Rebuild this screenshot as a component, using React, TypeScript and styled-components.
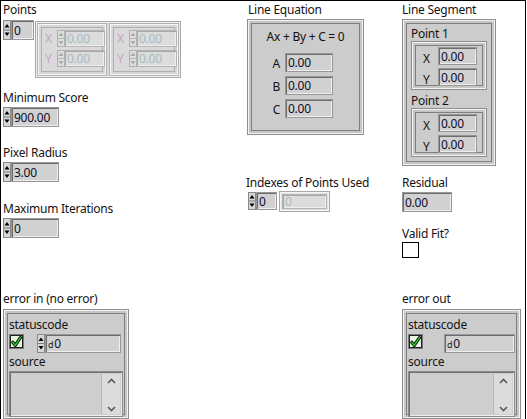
import React from "react";
import styled, { createGlobalStyle } from "styled-components";

const FONT = `"Noto Sans", "DejaVu Sans", sans-serif`;

const Global = createGlobalStyle`
  html, body { margin: 0; padding: 0; background: #fff; }
  body { font-family: ${FONT}; }
`;

const Panel = styled.div`
  position: relative;
  width: 526px;
  height: 419px;
  box-sizing: border-box;
  border: 1px solid #000;
  border-bottom: none;
  background: #fff;
  display: flex;
  padding: 1px 0 0 2px;
  overflow: hidden;
  font-family: ${FONT};
  font-size: 12px;
  letter-spacing: -0.25px;
  color: #141414;
`;

const Column = styled.div<{ $w?: number }>`
  display: flex;
  flex-direction: column;
  align-items: flex-start;
  flex: ${(p) => (p.$w ? `0 0 ${p.$w}px` : "1 1 auto")};
`;

const Label = styled.div<{ $mt?: number; $ml?: number }>`
  font-size: 12px;
  line-height: 15px;
  height: 15px;
  margin-top: ${(p) => p.$mt ?? 0}px;
  margin-left: ${(p) => p.$ml ?? 0}px;
  white-space: nowrap;
  color: #141414;
`;

const Row = styled.div<{ $mt?: number; $ml?: number; $gap?: number }>`
  display: flex;
  align-items: flex-start;
  margin-top: ${(p) => p.$mt ?? 0}px;
  margin-left: ${(p) => p.$ml ?? 0}px;
  gap: ${(p) => p.$gap ?? 0}px;
`;

const NumBox = styled.div<{ $w: number; $h?: number; $dim?: boolean; $ml?: number }>`
  width: ${(p) => p.$w}px;
  height: ${(p) => p.$h ?? 20}px;
  margin-left: ${(p) => p.$ml ?? 0}px;
  box-sizing: border-box;
  flex: none;
  background: ${(p) => (p.$dim ? "#dcdcdc" : "#d1d1d1")};
  border: 1px solid ${(p) => (p.$dim ? "#b4b4b4" : "#979797")};
  box-shadow: inset 1px 1px 0 ${(p) => (p.$dim ? "#a8a8a8" : "#6c6c6c")},
    inset -1px -1px 0 #eeeeee;
  padding-left: 2px;
  display: flex;
  align-items: center;
  font-size: 12px;
  color: ${(p) => (p.$dim ? "#a7bcc4" : "#0c0c2c")};
  white-space: nowrap;
`;

const Radix = styled.span`
  font-size: 9px;
  color: #222;
  margin-right: 1px;
  margin-top: 1px;
`;

const SpinSvg = styled.svg`
  display: block;
  flex: none;
`;

const Spin = ({ h = 20, dim = false }: { h?: number; dim?: boolean }) => {
  const m = h / 2;
  const c = dim ? "#a8a8a8" : "#000";
  return (
    <SpinSvg width={8} height={h} viewBox={`0 0 8 ${h}`}>
      <rect x="0.5" y="0.5" width="7" height={h - 1} fill={dim ? "#dedede" : "#d6d6d6"} stroke={dim ? "#b0b0b0" : "#8a8a8a"} />
      <line x1="1" y1={m} x2="7" y2={m} stroke={dim ? "#b0b0b0" : "#7a7a7a"} />
      <path d={`M4 ${m - 6} L6.5 ${m - 2.5} L1.5 ${m - 2.5} Z`} fill={c} />
      <path d={`M4 ${m + 6} L6.5 ${m + 2.5} L1.5 ${m + 2.5} Z`} fill={c} />
    </SpinSvg>
  );
};

const Cluster = styled.div<{ $w: number; $h: number; $mt?: number; $ml?: number; $pt?: number; $pl?: number }>`
  width: ${(p) => p.$w}px;
  height: ${(p) => p.$h}px;
  margin-top: ${(p) => p.$mt ?? 0}px;
  margin-left: ${(p) => p.$ml ?? 0}px;
  padding-top: ${(p) => p.$pt ?? 0}px;
  padding-left: ${(p) => p.$pl ?? 0}px;
  box-sizing: border-box;
  flex: none;
  background: #cccccc;
  border: 1px solid #8e8e8e;
  box-shadow: inset 0 0 0 1px #f2f2f2, inset 0 0 0 3px #c6c6c6, inset 0 0 0 4px #7e7e7e;
  display: flex;
  flex-direction: column;
  align-items: flex-start;
`;

const DimCluster = styled.div`
  width: 70px;
  height: 53px;
  box-sizing: border-box;
  background: #dadada;
  border: 1px solid #b2b2b2;
  box-shadow: inset 0 0 0 1px #f6f6f6, inset 0 0 0 3px #d6d6d6, inset 0 0 0 4px #b0b0b0;
  padding: 6px 0 0 7px;
  display: flex;
  flex-direction: column;
  gap: 3px;
`;

const ArrayFrame = styled.div`
  width: 146px;
  height: 57px;
  margin: 1px 0 0 1px;
  box-sizing: border-box;
  padding: 1px;
  gap: 2px;
  display: flex;
  background: #d8d8d8;
  border: 1px solid #a8a8a8;
  box-shadow: inset 0 0 0 1px #f0f0f0;
`;

const DimLetter = styled.span`
  width: 12px;
  font-size: 12px;
  line-height: 17px;
  color: #c5a6c6;
  flex: none;
`;

const EqText = styled.div`
  align-self: stretch;
  text-align: center;
  font-size: 12px;
  line-height: 15px;
  height: 15px;
  color: #101010;
`;

const EqRow = styled.div<{ $mt: number }>`
  display: flex;
  align-items: center;
  margin-top: ${(p) => p.$mt}px;
`;

const RowLetter = styled.span<{ $w: number }>`
  width: ${(p) => p.$w}px;
  font-size: 12px;
  text-align: right;
  padding-right: 5px;
  padding-top: 2px;
  box-sizing: border-box;
  color: #141414;
`;

const XYLetter = styled.span`
  width: 17px;
  padding-left: 2px;
  padding-top: 3px;
  box-sizing: border-box;
  font-size: 12px;
  color: #141414;
`;

const Frame2 = styled.div`
  margin-left: 2px;
  box-sizing: border-box;
  width: 51px;
  height: 21px;
  padding: 2px;
  background: #e2e2e2;
  border: 1px solid #a8a8a8;
  box-shadow: inset 0 0 0 1px #f4f4f4;
`;

const LedBox = styled.div`
  width: 17px;
  height: 17px;
  box-sizing: border-box;
  margin-top: 1px;
  border: 1px solid #000;
  background: #fff;
`;

const StatusRow = styled.div`
  display: flex;
  align-items: flex-start;
  margin-top: 2px;
  margin-left: 5px;
`;

const StringBox = styled.div<{ $w: number }>`
  width: ${(p) => p.$w}px;
  height: 46px;
  margin-top: 2px;
  margin-left: 5px;
  box-sizing: border-box;
  background: #cecece;
  border: 1px solid #8a8a8a;
  box-shadow: inset 1px 1px 0 #707070, inset -1px -1px 0 #ededed;
  display: flex;
  justify-content: flex-end;
  padding: 2px 2px 2px 0;
`;

const ScrollBar = styled.div`
  width: 18px;
  background: #dcdcdc;
  border-left: 1px solid #b8b8b8;
  display: flex;
  flex-direction: column;
  justify-content: space-between;
  align-items: center;
  padding: 4px 0 2px;
`;

const ChevSvg = styled.svg`
  display: block;
`;

const Chevron = ({ up }: { up?: boolean }) => (
  <ChevSvg width={9} height={6} viewBox="0 0 9 6">
    <path d={up ? "M1 5 L4.5 1.5 L8 5" : "M1 1 L4.5 4.5 L8 1"} fill="none" stroke="#5a5a5a" strokeWidth="1.6" />
  </ChevSvg>
);

const CheckSvg = styled.svg`
  display: block;
  flex: none;
`;

const CheckBox = () => (
  <CheckSvg width={15} height={15} viewBox="0 0 15 15">
    <rect x="0.5" y="0.5" width="14" height="14" fill="#f4f4f4" stroke="#7a7a7a" />
    <rect x="1.5" y="1.5" width="12" height="12" fill="#eaf5e4" stroke="#202020" />
    <path d="M3.8 8.2 L6.2 11.4 L11.4 3.6" fill="none" stroke="#0a0a0a" strokeWidth="3.2" strokeLinejoin="round" strokeLinecap="round" />
    <path d="M3.8 8.2 L6.2 11.4 L11.4 3.6" fill="none" stroke="#22d022" strokeWidth="1.5" strokeLinejoin="round" strokeLinecap="round" />
  </CheckSvg>
);

const PointCluster = () => (
  <DimCluster>
    {["X", "Y"].map((l) => (
      <Row key={l}>
        <DimLetter>{l}</DimLetter>
        <Spin h={17} dim />
        <NumBox $w={41} $h={17} $dim $ml={-1}>0.00</NumBox>
      </Row>
    ))}
  </DimCluster>
);

const XYCluster = ({ mt }: { mt: number }) => (
  <Cluster $w={76} $h={49} $mt={mt} $ml={8} $pt={5}>
    {["X", "Y"].map((l, i) => (
      <Row key={l} $mt={i ? 1 : 0} $ml={9}>
        <XYLetter>{l}</XYLetter>
        <NumBox $w={39} $h={18}>0.00</NumBox>
      </Row>
    ))}
  </Cluster>
);

const ErrorCluster = ({ spinner, w }: { spinner: boolean; w: number }) => (
  <Cluster $w={w} $h={110} $mt={3} $pt={7}>
    <Label $ml={5}>statuscode</Label>
    <StatusRow>
      <CheckBox />
      {spinner ? (
        <Row $ml={13}>
          <Spin h={19} />
          <NumBox $w={w - 50} $h={19}>
            <Radix>d</Radix>0
          </NumBox>
        </Row>
      ) : (
        <NumBox $w={w - 48} $h={19} $ml={21}>
          <Radix>d</Radix>0
        </NumBox>
      )}
    </StatusRow>
    <Label $ml={5} $mt={1}>source</Label>
    <StringBox $w={w - 12}>
      <ScrollBar>
        <Chevron up />
        <Chevron />
      </ScrollBar>
    </StringBox>
  </Cluster>
);

export default function App() {
  return (
    <>
      <Global />
      <Panel>
        <Column $w={243}>
          <Label>Points</Label>
          <Row $mt={3}>
            <Row>
              <Spin h={20} />
              <NumBox $w={23} $h={20}>0</NumBox>
            </Row>
            <ArrayFrame>
              <PointCluster />
              <PointCluster />
            </ArrayFrame>
          </Row>
          <Label $mt={12}>Minimum Score</Label>
          <Row $mt={2}>
            <Spin h={20} />
            <NumBox $w={48}>900.00</NumBox>
          </Row>
          <Label $mt={18}>Pixel Radius</Label>
          <Row $mt={2}>
            <Spin h={20} />
            <NumBox $w={48}>3.00</NumBox>
          </Row>
          <Label $mt={19}>Maximum Iterations</Label>
          <Row $mt={2}>
            <Spin h={20} />
            <NumBox $w={48}>0</NumBox>
          </Row>
          <Label $mt={53}>error in (no error)</Label>
          <ErrorCluster spinner w={126} />
        </Column>

        <Column $w={156}>
          <Label $ml={2}>Line Equation</Label>
          <Cluster $w={117} $h={116} $mt={2} $ml={1} $pt={9}>
            <EqText>Ax + By + C = 0</EqText>
            {["A", "B", "C"].map((l, i) => (
              <EqRow key={l} $mt={i ? 4 : 9}>
                <RowLetter $w={37}>{l}</RowLetter>
                <NumBox $w={48} $h={19}>0.00</NumBox>
              </EqRow>
            ))}
          </Cluster>
          <Label $mt={40}>Indexes of Points Used</Label>
          <Row $mt={1} $ml={2}>
            <Row $mt={1}>
              <Spin h={18} />
              <NumBox $w={21} $h={18}>0</NumBox>
            </Row>
            <Frame2>
              <NumBox $w={45} $h={15} $dim>0</NumBox>
            </Frame2>
          </Row>
        </Column>

        <Column>
          <Label>Line Segment</Label>
          <Cluster $w={94} $h={147} $mt={2} $pt={6}>
            <Label $ml={8}>Point 1</Label>
            <XYCluster mt={0} />
            <Label $ml={8} $mt={3}>Point 2</Label>
            <XYCluster mt={0} />
          </Cluster>
          <Label $mt={9}>Residual</Label>
          <Row $mt={2}>
            <NumBox $w={50}>0.00</NumBox>
          </Row>
          <Label $mt={14}>Valid Fit?</Label>
          <LedBox />
          <Label $mt={33}>error out</Label>
          <ErrorCluster spinner={false} w={119} />
        </Column>
      </Panel>
    </>
  );
}
